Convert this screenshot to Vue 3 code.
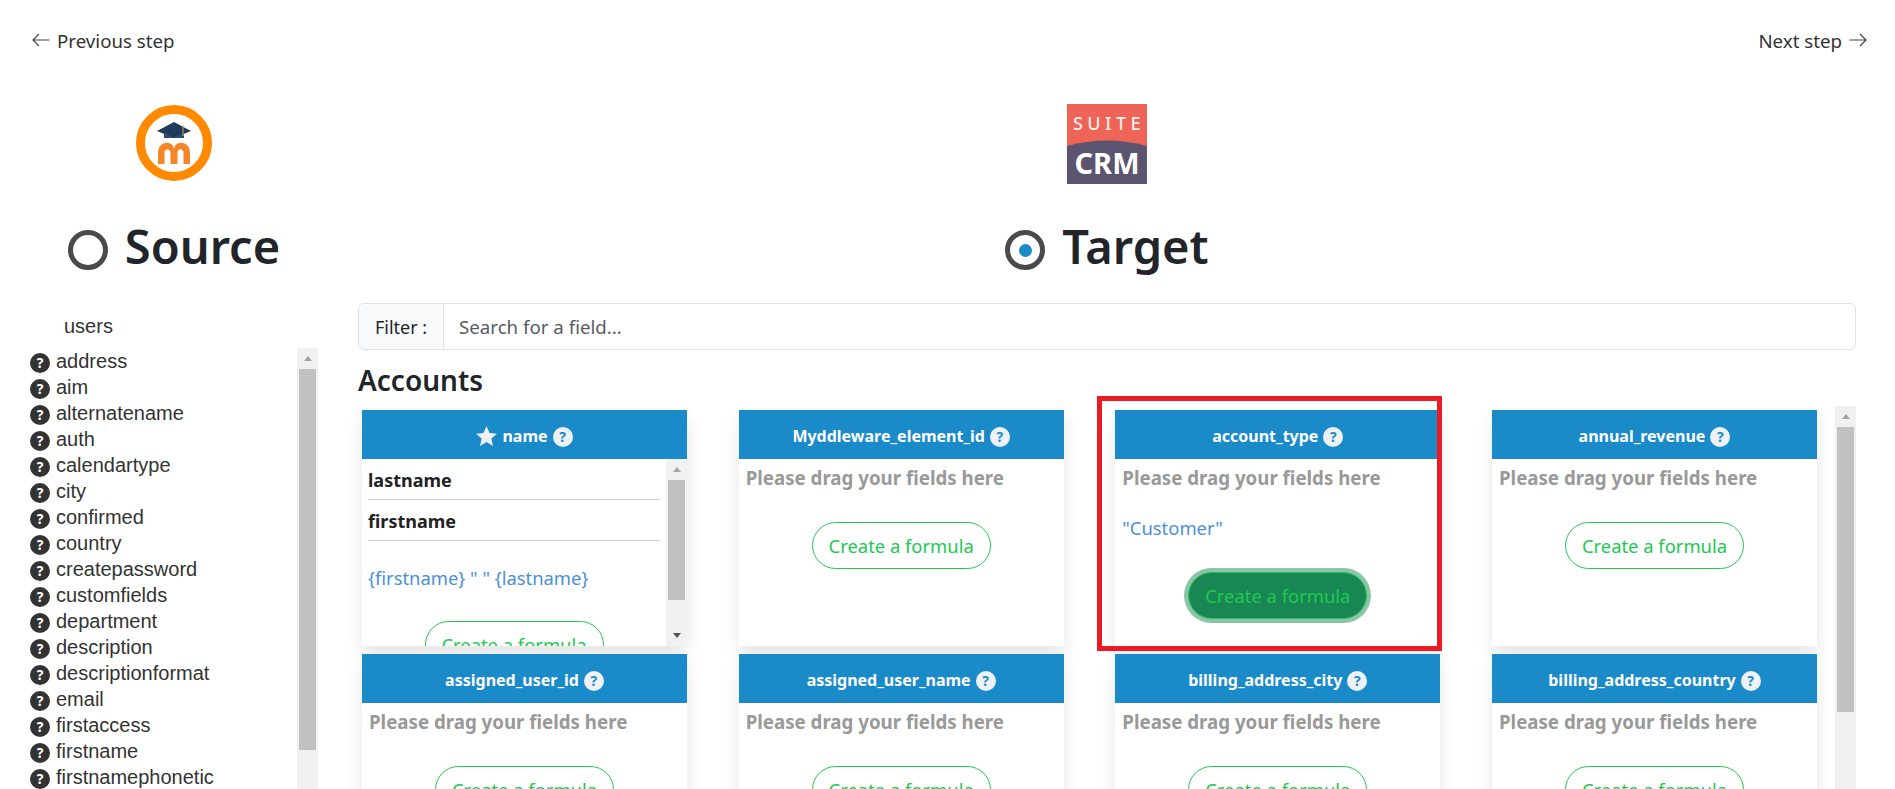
<script setup>
const sourceFields = ["address","aim","alternatename","auth","calendartype","city","confirmed","country","createpassword","customfields","department","description","descriptionformat","email","firstaccess","firstname","firstnamephonetic"]
const targetCards = [
  { name: "name", star: true, fields: ["lastname","firstname"], formula: '{firstname} " " {lastname}' },
  { name: "Myddleware_element_id" },
  { name: "account_type", formula: '"Customer"', active: true, marked: true },
  { name: "annual_revenue" },
  { name: "assigned_user_id" },
  { name: "assigned_user_name" },
  { name: "billing_address_city" },
  { name: "billing_address_country" },
]
</script>

<template>
  <div class="page">
    <nav class="steps">
      <a class="step">
        <svg width="18" height="14" viewBox="0 0 18 14"><path d="M17.5 7H1M7 1L1 7l6 6" fill="none" stroke="#444" stroke-width="1.2"/></svg>
        Previous step
      </a>
      <a class="step">
        Next step
        <svg width="18" height="14" viewBox="0 0 18 14"><path d="M.5 7H17M11 1l6 6-6 6" fill="none" stroke="#444" stroke-width="1.2"/></svg>
      </a>
    </nav>

    <div class="columns">
      <section class="source">
        <div class="brand">
          <svg width="78" height="78" viewBox="0 0 78 78">
            <circle cx="39" cy="39" r="33.500" fill="#fff" stroke="#ff8a00" stroke-width="9"/>
            <path d="M39 18L56 27 39 34 22 27z" fill="#1f3a5a"/>
            <path d="M29 29l10 4 10-4v5H29z" fill="#2d4a6e"/>
            <path d="M48 21v11" stroke="#d9a441" stroke-width="1"/>
            <path d="M23 60V49c0-13 16-13 16-3 0-10 16-10 16 3v11h-6.500V49c0-5-6-5-6 0v11h-7V49c0-5-6-5-6 0v11z" fill="#f58529"/>
          </svg>
        </div>
        <h1 class="side-title"><span class="radio"></span>Source</h1>
        <div class="module-name">users</div>
        <div class="scroll-box source-box">
          <ul class="field-list">
            <li v-for="field in sourceFields" :key="field">
              <span class="help dark">?</span>{{ field }}
            </li>
          </ul>
          <div class="bar">
            <span class="arrow up"></span>
            <span class="thumb" style="height: 381px"></span>
          </div>
        </div>
      </section>

      <section class="target">
        <div class="brand">
          <svg width="80" height="80" viewBox="0 0 80 80">
            <rect width="80" height="80" fill="#ee6558"/>
            <path d="M0 42Q40 31 80 42V80H0z" fill="#5b5470"/>
            <text x="42" y="26" text-anchor="middle" class="logo-suite">SUITE</text>
            <text x="40" y="70" text-anchor="middle" class="logo-crm">CRM</text>
          </svg>
        </div>
        <h1 class="side-title"><span class="radio on"></span>Target</h1>
        <div class="filter">
          <label>Filter :</label>
          <input type="text" placeholder="Search for a field..." />
        </div>
        <h3 class="module-title">Accounts</h3>
        <div class="scroll-box target-box">
          <div class="cards">
            <article v-for="card in targetCards" :key="card.name" class="card">
              <header class="card-head">
                <svg v-if="card.star" width="21" height="20" viewBox="0 0 24 23"><path d="M12 0l3.500 8 8.500.8-6.400 5.700 1.900 8.500L12 18.500 4.500 23l1.900-8.500L0 8.800 8.500 8z" fill="#eef2f6"/></svg>
                <span>{{ card.name }}</span>
                <span class="help light">?</span>
              </header>
              <div v-if="card.fields" class="card-body with-bar">
                <div class="card-scroll">
                  <div v-for="f in card.fields" :key="f" class="mapped">{{ f }}</div>
                  <p class="formula spaced">{{ card.formula }}</p>
                  <button class="formula-btn">Create a formula</button>
                </div>
                <div class="bar">
                  <span class="arrow up"></span>
                  <span class="thumb" style="height: 120px"></span>
                  <span class="bar-fill"></span>
                  <span class="arrow down"></span>
                </div>
              </div>
              <div v-else class="card-body">
                <div class="hint">Please drag your fields here</div>
                <p v-if="card.formula" class="formula">{{ card.formula }}</p>
                <button class="formula-btn" :class="{ active: card.active }">Create a formula</button>
              </div>
              <div v-if="card.marked" class="red-mark"></div>
            </article>
          </div>
          <div class="bar">
            <span class="arrow up"></span>
            <span class="thumb" style="height: 285px"></span>
          </div>
        </div>
      </section>
    </div>
  </div>
</template>

<style scoped>
.page {
  height: 789px;
  overflow: hidden;
  font-family: "Noto Sans", "Open Sans", sans-serif;
  color: #212529;
  background: #fff;
}

.steps {
  display: flex;
  justify-content: space-between;
  padding: 28px 28px 0 32px;
  height: 75px;
  box-sizing: border-box;
}

.step {
  display: flex;
  align-items: center;
  gap: 7px;
  height: 24px;
  font-size: 18.7px;
  color: #333;
}

.columns {
  display: grid;
  grid-template-columns: 288px 1fr;
  gap: 40px;
  padding: 0 39px 0 30px;
}

.brand {
  display: flex;
  justify-content: center;
  height: 80px;
  margin-top: 29px;
}

.side-title {
  display: flex;
  align-items: center;
  justify-content: center;
  gap: 17px;
  margin: 31px 0 0;
  height: 62px;
  font-size: 47px;
  font-weight: 600;
}

.radio {
  width: 40px;
  height: 40px;
  margin-top: 8px;
  box-sizing: border-box;
  border: 5px solid #4a4a4a;
  border-radius: 50%;
  display: flex;
  align-items: center;
  justify-content: center;
}

.radio.on::after {
  content: "";
  width: 13px;
  height: 13px;
  border-radius: 50%;
  background: #1a8ac9;
}

.module-name {
  margin: 37px 0 10px 34px;
  font-family: "Liberation Sans", Arial, sans-serif;
  font-size: 20px;
  line-height: 24px;
  color: #333;
}

.scroll-box {
  display: flex;
}

.source-box {
  height: 520px;
}

.field-list {
  flex: 1;
  list-style: none;
  margin: 0;
  padding: 0;
  font-family: "Liberation Sans", Arial, sans-serif;
  font-size: 20px;
  color: #333;
}

.field-list li {
  display: flex;
  align-items: center;
  gap: 6px;
  height: 26px;
}

.help {
  width: 20px;
  height: 20px;
  border-radius: 50%;
  flex: none;
  display: inline-flex;
  align-items: center;
  justify-content: center;
  font-family: "Noto Sans", sans-serif;
  font-size: 14px;
  font-weight: 700;
  line-height: 1;
}

.help.dark {
  margin-top: 3px;
  background: #333;
  color: #fff;
}

.help.light {
  margin-top: 3px;
  background: #eef2f6;
  color: #1a8ac9;
}

.bar {
  flex: none;
  width: 21px;
  display: flex;
  flex-direction: column;
  align-items: center;
  background: #f1f1f1;
}

.arrow {
  flex: none;
  width: 21px;
  height: 21px;
  display: flex;
  align-items: center;
  justify-content: center;
}

.arrow::after {
  content: "";
  border-left: 4.500px solid transparent;
  border-right: 4.500px solid transparent;
}

.arrow.up::after {
  border-bottom: 5px solid #a3a3a3;
}

.arrow.down::after {
  border-top: 5px solid #505050;
}

.thumb {
  flex: none;
  width: 17px;
  background: #c1c1c1;
}

.bar-fill {
  flex: 1;
}

.filter {
  display: flex;
  height: 47px;
  margin-top: 26px;
  border: 1px solid #dee2e6;
  border-radius: 6px;
  box-sizing: border-box;
  font-size: 18.7px;
}

.filter label {
  width: 84px;
  display: flex;
  align-items: center;
  justify-content: center;
  background: #f8f9fa;
  border-right: 1px solid #dee2e6;
  border-radius: 6px 0 0 6px;
  font-size: 18px;
}

.filter input {
  flex: 1;
  border: 0;
  outline: 0;
  padding: 0 15px;
  border-radius: 0 6px 6px 0;
  font: inherit;
  background: #fff;
}

.filter input::placeholder {
  color: #595c5f;
  opacity: 1;
}

.module-title {
  margin: 12px 0 0;
  height: 44px;
  line-height: 36px;
  font-size: 28px;
  font-weight: 600;
}

.target-box {
  height: 600px;
}

.cards {
  flex: 1;
  display: grid;
  grid-template-columns: repeat(4, 325px);
  grid-auto-rows: 236px;
  justify-content: space-between;
  row-gap: 8px;
  padding: 4px 18px 0 4px;
}

.card {
  position: relative;
  display: flex;
  flex-direction: column;
  background: #fff;
  box-shadow: 0 8px 16px rgba(0, 0, 0, 0.1);
}

.card-head {
  flex: none;
  height: 49px;
  box-sizing: border-box;
  padding-top: 2px;
  display: flex;
  align-items: center;
  justify-content: center;
  gap: 5px;
  background: #1a8ac9;
  color: #fff;
  font-size: 16px;
  font-weight: 700;
}

.card-body {
  flex: 1;
  min-height: 0;
  padding: 0 7px;
  text-align: center;
}

.card-body.with-bar {
  display: flex;
  padding: 0;
}

.card-scroll {
  flex: 1;
  overflow: hidden;
  padding: 0 6px;
  text-align: center;
}

.hint {
  text-align: left;
  margin-top: 5px;
  line-height: 27px;
  font-size: 18.7px;
  font-weight: 700;
  color: #999;
}

.mapped {
  height: 41px;
  box-sizing: border-box;
  line-height: 42px;
  text-align: left;
  border-bottom: 1px solid #ccc;
  font-size: 18px;
  font-weight: 700;
  color: #222;
}

.formula {
  margin: 25px 0 32px;
  text-align: left;
  line-height: 24px;
  font-size: 18.4px;
  color: #4a90d9;
}

.formula.spaced {
  margin: 25px 0 31px;
}

.formula-btn {
  width: 179px;
  height: 47px;
  margin-top: 31px;
  border: 1px solid #20c94f;
  border-radius: 24px;
  background: #fff;
  color: #20c94f;
  font: inherit;
  font-size: 18.4px;
}

.formula + .formula-btn {
  margin-top: 0;
}

.formula-btn.active {
  background: #198754;
  box-shadow: 0 0 0 4px rgba(25, 135, 84, 0.5);
}

.red-mark {
  position: absolute;
  left: -18px;
  top: -14px;
  width: 345px;
  height: 255px;
  box-sizing: border-box;
  border: 5px solid #ed1c24;
  pointer-events: none;
}

.logo-suite {
  font-family: "Noto Sans", sans-serif;
  font-size: 18px;
  font-weight: 500;
  letter-spacing: 4.500px;
  fill: #fdeeea;
}

.logo-crm {
  font-family: "Noto Sans", sans-serif;
  font-size: 29px;
  font-weight: 700;
  fill: #fff;
}
</style>

<style>
html, body {
  margin: 0;
  overflow: hidden;
}
</style>
